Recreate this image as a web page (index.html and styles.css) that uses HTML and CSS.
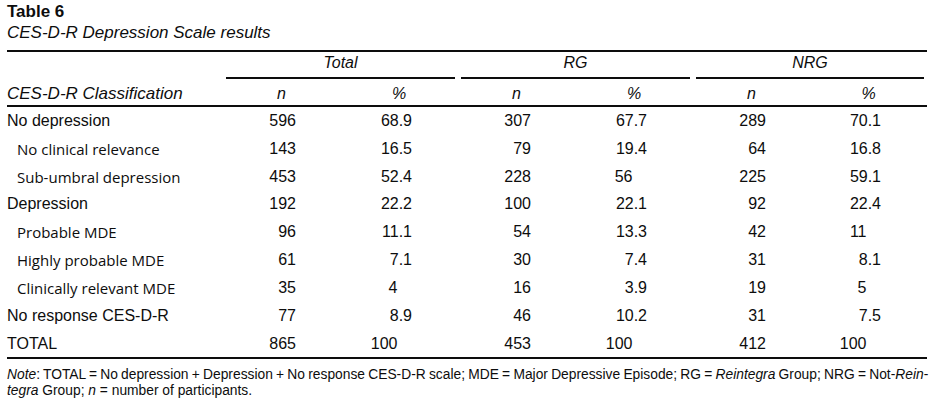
FILE: index.html
```html
<!DOCTYPE html>
<html lang="en">
<head>
<meta charset="utf-8">
<title>Table 6</title>
<link rel="stylesheet" href="styles.css">
</head>
<body>
<div class="page">
  <div class="title">Table 6</div>
  <div class="subtitle">CES-D-R Depression Scale results</div>
  <table class="results">
    <colgroup>
      <col class="c-lab">
      <col class="c-n"><col class="c-p">
      <col class="c-n"><col class="c-p">
      <col class="c-n"><col class="c-p2">
    </colgroup>
    <thead>
      <tr class="groups">
        <th></th>
        <th colspan="2"><div class="grp">Total</div></th>
        <th colspan="2"><div class="grp">RG</div></th>
        <th colspan="2"><div class="grp">NRG</div></th>
      </tr>
      <tr class="cols">
        <th class="lab">CES-D-R Classification</th>
        <th>n</th><th>%</th>
        <th>n</th><th>%</th>
        <th>n</th><th>%</th>
      </tr>
    </thead>
    <tbody>
      <tr class="main"><td class="lab">No depression</td><td class="n">596</td><td class="p">68.9</td><td class="n">307</td><td class="p">67.7</td><td class="n">289</td><td class="p">70.1</td></tr>
      <tr class="sub"><td class="lab">No clinical relevance</td><td class="n">143</td><td class="p">16.5</td><td class="n">79</td><td class="p">19.4</td><td class="n">64</td><td class="p">16.8</td></tr>
      <tr class="sub"><td class="lab">Sub-umbral depression</td><td class="n">453</td><td class="p">52.4</td><td class="n">228</td><td class="p int">56</td><td class="n">225</td><td class="p">59.1</td></tr>
      <tr class="main"><td class="lab">Depression</td><td class="n">192</td><td class="p">22.2</td><td class="n">100</td><td class="p">22.1</td><td class="n">92</td><td class="p">22.4</td></tr>
      <tr class="sub"><td class="lab">Probable MDE</td><td class="n">96</td><td class="p">11.1</td><td class="n">54</td><td class="p">13.3</td><td class="n">42</td><td class="p int">11</td></tr>
      <tr class="sub"><td class="lab">Highly probable MDE</td><td class="n">61</td><td class="p">7.1</td><td class="n">30</td><td class="p">7.4</td><td class="n">31</td><td class="p">8.1</td></tr>
      <tr class="sub"><td class="lab">Clinically relevant MDE</td><td class="n">35</td><td class="p int">4</td><td class="n">16</td><td class="p">3.9</td><td class="n">19</td><td class="p int">5</td></tr>
      <tr class="main"><td class="lab">No response CES-D-R</td><td class="n">77</td><td class="p">8.9</td><td class="n">46</td><td class="p">10.2</td><td class="n">31</td><td class="p">7.5</td></tr>
      <tr class="main last"><td class="lab">TOTAL</td><td class="n">865</td><td class="p int">100</td><td class="n">453</td><td class="p int">100</td><td class="n">412</td><td class="p int">100</td></tr>
    </tbody>
  </table>
  <p class="note"><span class="tight"><i>Note</i>: TOTAL = No depression + Depression + No response CES-D-R scale; MDE = Major Depressive Episode; RG = <i>Reintegra</i> Group; NRG = Not-<i>Rein</i>-</span><br><i>tegra</i> Group; <i>n</i> = number of participants.</p>
</div>
</body>
</html>
```
FILE: styles.css
```css
html, body {
  margin: 0;
  padding: 0;
  background: #fff;
}
body {
  color: #0d0d0d;
  font-family: "Liberation Sans", Arial, sans-serif;
}
.page {
  padding: 2px 0 0 7px;
  width: 920px;
}
.title {
  font-weight: bold;
  font-size: 17px;
  line-height: 20px;
}
.subtitle {
  font-style: italic;
  font-size: 17px;
  line-height: 20px;
  margin-top: 1px;
  margin-bottom: 7px;
}
.results {
  width: 920px;
  table-layout: fixed;
  border-collapse: separate;
  border-spacing: 0;
}
.c-lab { width: 216px; }
.c-n { width: 117px; }
.c-p { width: 118px; }
.c-p2 { width: 117px; }
.results th, .results td {
  padding: 0;
}
.groups th {
  border-top: 2px solid #0d0d0d;
  font-weight: normal;
  font-style: italic;
  font-size: 16px;
  text-align: center;
  vertical-align: top;
}
.grp {
  line-height: 22.4px;
  height: 22.4px;
  padding-bottom: 3.1px;
  margin: 0 3px;
  border-bottom: 2px solid #0d0d0d;
}
.cols th {
  font-weight: normal;
  font-style: italic;
  font-size: 16px;
  line-height: 18px;
  padding: 5.2px 0 2.3px;
  text-align: center;
  border-bottom: 2px solid #0d0d0d;
}
.cols th.lab {
  font-size: 17px;
  text-align: left;
  padding-top: 5.4px;
  padding-bottom: 2.1px;
}
tbody td {
  height: 27.83px;
  font-size: 16px;
  line-height: 18px;
  vertical-align: middle;
  white-space: nowrap;
}
tbody td.n {
  text-align: right;
  padding-right: 44px;
}
tbody td.p {
  text-align: right;
  padding-right: 46px;
}
tbody td.p.int {
  padding-right: 60.5px;
}
.sub td.lab {
  font-family: "Open Sans", sans-serif;
  font-size: 15px;
  padding-left: 10px;
}
.last td {
  border-bottom: 2px solid #0d0d0d;
}
.note {
  margin: 8px 0 0;
  font-size: 13.8px;
  line-height: 16px;
  white-space: nowrap;
}
.tight {
  word-spacing: -0.6px;
}
```
